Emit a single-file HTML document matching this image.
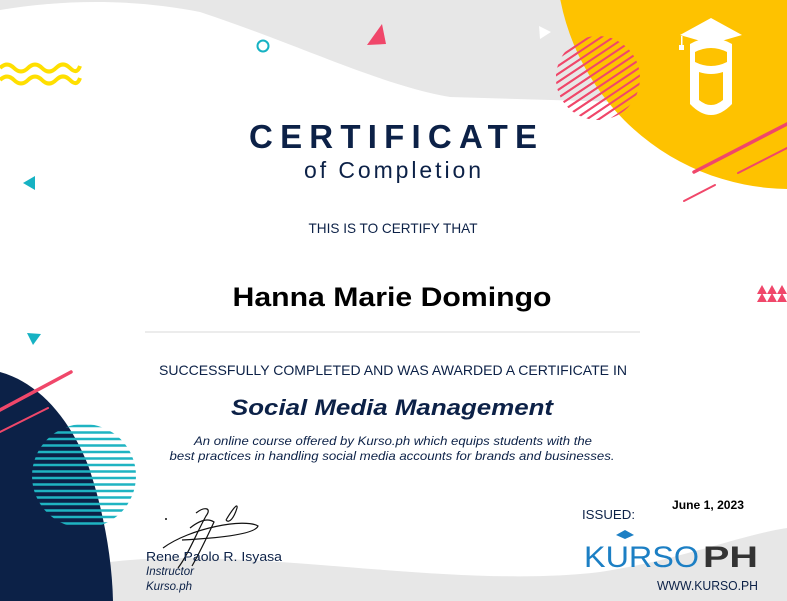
<!DOCTYPE html>
<html><head><meta charset="utf-8"><style>
html,body{margin:0;padding:0;background:#fff;width:787px;height:601px;overflow:hidden}
svg{display:block}
text{font-family:"Liberation Sans",sans-serif}
</style></head><body>
<svg width="787" height="601" viewBox="0 0 787 601" xmlns="http://www.w3.org/2000/svg">
<defs>
<clipPath id="pc"><circle cx="598" cy="78" r="42"/></clipPath>
<clipPath id="tc"><circle cx="84" cy="476" r="52"/></clipPath>
</defs>
<rect width="787" height="601" fill="#fff"/>
<path d="M0,0 L620,0 L620,102 L450,97 C380,85 300,45 200,12 C130,-2 60,0 0,10 Z" fill="#e7e7e7"/>
<path d="M110,562 C250,545 450,590 600,572 C680,560 740,535 787,528 L787,601 L110,601 Z" fill="#e7e7e7"/>
<g clip-path="url(#pc)" stroke="#f0476a" stroke-width="2">
<path d="M540,70 L600,30 M540,78 L612,30 M540,86 L624,30 M540,94 L636,30 M540,102 L648,30 M540,110 L660,30 M540,118 L660,38 M540,126 L660,46 M540,134 L660,54 M550,136 L660,62 M562,136 L660,70 M574,136 L660,78 M586,136 L660,86 M598,136 L660,94 M610,136 L660,102 M540,62 L588,30 M540,54 L576,30 M540,46 L564,30"/>
</g>
<circle cx="790" cy="-45" r="234" fill="#fec200"/>
<g clip-path="url(#pc)"><g stroke="#f0476a" stroke-width="2">
<path d="M540,70 L600,30 M540,78 L612,30 M540,86 L624,30 M540,94 L636,30 M540,102 L648,30 M540,110 L660,30 M540,118 L660,38 M540,126 L660,46 M540,134 L660,54 M550,136 L660,62 M562,136 L660,70 M574,136 L660,78 M586,136 L660,86 M598,136 L660,94 M610,136 L660,102"/></g></g>
<!-- cap/cup logo -->
<g fill="#fff">
<path d="M690,44 Q711,32 732,44 L732,104 Q711,126 690,104 Z"/>
<path d="M711,18 L742,35 L711,44 L680,35 Z"/>
<rect x="681" y="36" width="1.5" height="10"/><rect x="679" y="45" width="5" height="5"/>
</g>
<g fill="#fec200">
<path d="M695,52 Q711,44 727,52 L727,62 Q711,70 695,62 Z"/>
<path d="M699,72 Q711,76 723,72 L723,100 Q711,110 699,100 Z"/>
</g>
<g stroke="#f0476a" stroke-linecap="round">
<line x1="694" y1="172" x2="787" y2="124" stroke-width="3.5"/>
<line x1="738" y1="173" x2="787" y2="148" stroke-width="2"/>
<line x1="684" y1="201" x2="715" y2="185" stroke-width="2"/>
</g>
<path d="M367,45 L382,24 L386,44 Z" fill="#f0476a"/>
<path d="M539,26 L551,32 L540,39 Z" fill="#fff"/>
<circle cx="263" cy="46" r="5.5" fill="none" stroke="#16b2c3" stroke-width="2"/>
<path d="M23,183 L35,176 L35,190 Z" fill="#16b2c3"/>
<path d="M27,333 L41,334 L33,345 Z" fill="#16b2c3"/>
<g fill="#f0476a"><path d="M757,294 L762,285 L767,294Z M767,294 L772,285 L777,294Z M777,294 L782,285 L787,294Z M757,302 L762,293 L767,302Z M767,302 L772,293 L777,302Z M777,302 L782,293 L787,302Z"/></g>
<g fill="none" stroke="#ffdf00" stroke-width="4">
<path d="M0,68 q7,-7 14,0 t14,0 t14,0 t14,0 t14,0 t10,-2"/>
<path d="M0,80 q7,-7 14,0 t14,0 t14,0 t14,0 t14,0 t10,-2"/>
</g>
<path d="M0,372 C40,383 70,420 88,465 C102,505 112,555 113,601 L0,601 Z" fill="#0c2147"/>
<g clip-path="url(#tc)" stroke="#1fb4c2" stroke-width="2.6">
<path d="M20,426 H150 M20,432.5 H150 M20,439 H150 M20,445.5 H150 M20,452 H150 M20,458.5 H150 M20,465 H150 M20,471.5 H150 M20,478 H150 M20,484.5 H150 M20,491 H150 M20,497.5 H150 M20,504 H150 M20,510.5 H150 M20,517 H150 M20,523.5 H150"/>
</g>
<g stroke="#f0476a" stroke-linecap="round">
<line x1="0" y1="410" x2="71" y2="372" stroke-width="3.5"/>
<line x1="0" y1="432" x2="48" y2="408" stroke-width="2"/>
</g>
<text x="249" y="148" font-size="33" font-weight="bold" fill="#0c2147" textLength="288" lengthAdjust="spacing">CERTIFICATE</text>
<text x="304" y="178" font-size="23" fill="#0c2147" textLength="177" lengthAdjust="spacing">of Completion</text>
<text x="393" y="233" text-anchor="middle" font-size="14" fill="#0c2147" textLength="169" lengthAdjust="spacingAndGlyphs">THIS IS TO CERTIFY THAT</text>
<text x="392" y="306" text-anchor="middle" font-size="27" font-weight="bold" fill="#000" textLength="319" lengthAdjust="spacingAndGlyphs">Hanna Marie Domingo</text>
<line x1="145" y1="332" x2="640" y2="332" stroke="#d8d8d8" stroke-width="1"/>
<text x="393" y="375" text-anchor="middle" font-size="14" fill="#0c2147" textLength="468" lengthAdjust="spacingAndGlyphs">SUCCESSFULLY COMPLETED AND WAS AWARDED A CERTIFICATE IN</text>
<text x="392" y="415" text-anchor="middle" font-size="22" font-weight="bold" font-style="italic" fill="#0c2147" textLength="322" lengthAdjust="spacingAndGlyphs">Social Media Management</text>
<text x="393" y="445" text-anchor="middle" font-size="12" font-style="italic" fill="#0c2147" textLength="398" lengthAdjust="spacingAndGlyphs">An online course offered by Kurso.ph which equips students with the</text>
<text x="392" y="460" text-anchor="middle" font-size="12" font-style="italic" fill="#0c2147" textLength="445" lengthAdjust="spacingAndGlyphs">best practices in handling social media accounts for brands and businesses.</text>
<g fill="none" stroke="#111" stroke-width="1.2">
<path d="M196,513 C205,506 212,508 206,516 C198,530 188,555 178,568"/>
<path d="M190,528 C200,520 208,518 214,522 C208,535 200,552 192,566"/>
<path d="M163,548 C190,528 245,518 258,526 C255,534 220,538 182,540"/>
<path d="M226,520 C232,510 238,502 237,508 C234,518 229,524 226,520"/>
</g>
<circle cx="166" cy="519" r="1" fill="#111"/>
<text x="146" y="561" font-size="13" fill="#0c2147" textLength="136" lengthAdjust="spacingAndGlyphs">Rene Paolo R. Isyasa</text>
<text x="146" y="575" font-size="11.5" font-style="italic" fill="#0c2147">Instructor</text>
<text x="146" y="590" font-size="11.5" font-style="italic" fill="#0c2147">Kurso.ph</text>
<text x="582" y="519" font-size="13" fill="#0c2147" textLength="53" lengthAdjust="spacingAndGlyphs">ISSUED:</text>
<text x="672" y="509" font-size="12" font-weight="bold" fill="#000" textLength="72" lengthAdjust="spacingAndGlyphs">June 1, 2023</text>
<text x="584" y="567" font-size="30" fill="#1c7fc4" textLength="115" lengthAdjust="spacingAndGlyphs">KURSO</text>
<text x="703" y="567" font-size="30" font-weight="bold" fill="#333" textLength="55" lengthAdjust="spacingAndGlyphs">PH</text>
<path d="M616,535 L625,530 L634,535 L625,539 Z" fill="#1c7fc4"/>
<text x="657" y="590" font-size="12.5" fill="#0c2147" textLength="101" lengthAdjust="spacingAndGlyphs">WWW.KURSO.PH</text>
</svg>
</body></html>
